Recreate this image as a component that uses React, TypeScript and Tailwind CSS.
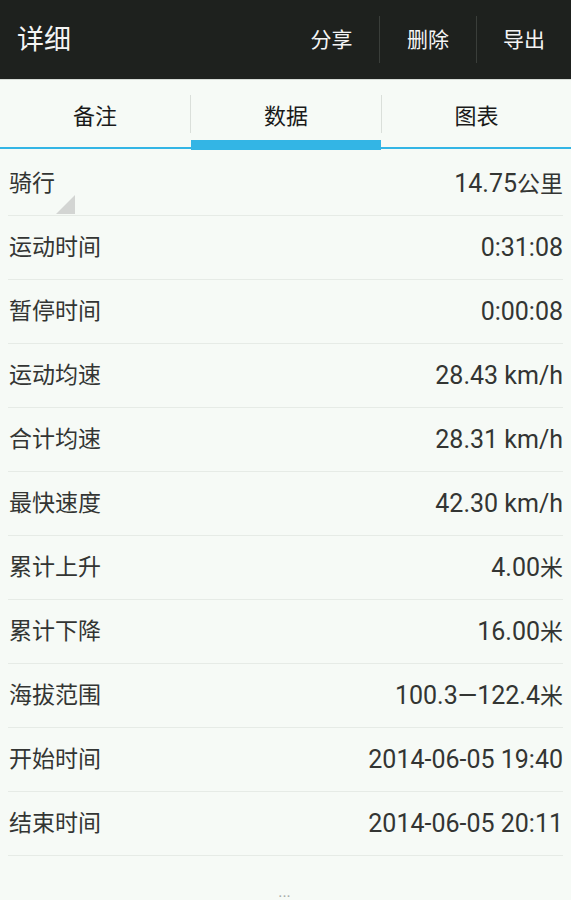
import React from "react";

const rows: [string, string, string][] = [
  ["运动时间", "0:31:08", ""],
  ["暂停时间", "0:00:08", ""],
  ["运动均速", "28.43 km/h", ""],
  ["合计均速", "28.31 km/h", ""],
  ["最快速度", "42.30 km/h", ""],
  ["累计上升", "4.00", "米"],
  ["累计下降", "16.00", "米"],
  ["海拔范围", "100.3—122.4", "米"],
  ["开始时间", "2014-06-05 19:40", ""],
  ["结束时间", "2014-06-05 20:11", ""],
];

const font = "font-['Roboto','Noto_Sans_CJK_SC',sans-serif]";

export default function App() {
  return (
    <div className={`w-[571px] h-[900px] bg-[#f6faf6] overflow-hidden ${font}`}>
      <div className="h-[79px] bg-[#1e211e] flex items-center text-[#f4f4f4]">
        <div className="pl-[17px] text-[27px] flex-1 leading-none pt-[2px]">详细</div>
        <div className="flex items-center h-full">
          <div className="w-[95px] text-center text-[21px] pt-[2px]">分享</div>
          <div className="w-px h-[47px] bg-[#3a3e3a]" />
          <div className="w-[96px] text-center text-[21px] pt-[2px]">删除</div>
          <div className="w-px h-[47px] bg-[#3a3e3a]" />
          <div className="w-[94px] text-center text-[21px] pt-[2px]">导出</div>
        </div>
      </div>
      <div className="h-px bg-[#d6dbd6]" />
      <div className="relative h-[72px] flex">
        <div className="absolute left-0 right-0 top-[67px] h-[2px] bg-[#33b5e5]" />
        <div className="w-[190px] flex items-center justify-center text-[22px] text-[#1a1a1a]">备注</div>
        <div className="flex items-start pt-[15px]"><div className="w-px h-[38px] bg-[#dadfda]" /></div>
        <div className="relative w-[190px] flex items-center justify-center text-[22px] text-[#1a1a1a]">
          数据
          <div className="absolute left-0 right-0 top-[60px] h-[10px] bg-[#33b5e5]" />
        </div>
        <div className="flex items-start pt-[15px]"><div className="w-px h-[38px] bg-[#dadfda]" /></div>
        <div className="flex-1 flex items-center justify-center text-[22px] text-[#1a1a1a]">图表</div>
      </div>
      <div className="px-[8px]">
        <div className="relative h-[64px] flex items-center justify-between border-b border-[#e6ebe6] text-[23px] text-[#333533]">
          <span className="pl-[1px] pt-[1px]">骑行</span>
          <span className="pt-[1px]"><span className="text-[25px]">14.75</span>公里</span>
          <svg className="absolute left-[48px] bottom-[1px]" width="19" height="19" viewBox="0 0 19 19">
            <polygon points="19,0 19,19 0,19" fill="#d3d5d3" />
          </svg>
        </div>
        {rows.map(([k, v, u]) => (
          <div key={k} className="h-[64px] flex items-center justify-between border-b border-[#e6ebe6] text-[23px] text-[#333533]">
            <span className="pl-[1px] pt-[1px]">{k}</span>
            <span className="pt-[1px]"><span className="text-[25px]">{v}</span>{u}</span>
          </div>
        ))}
      </div>
      <div className="text-center text-[#a8aca8] text-[16px] leading-none mt-[28px] pr-[2px]">...</div>
    </div>
  );
}
